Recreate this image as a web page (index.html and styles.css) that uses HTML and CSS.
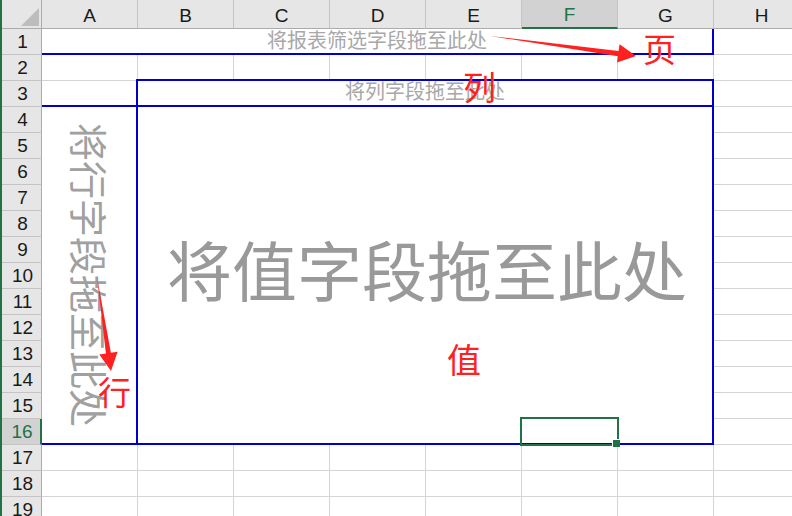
FILE: index.html
```html
<!DOCTYPE html>
<html lang="zh-CN">

<head>
    <meta charset="UTF-8">
    <title>数据透视表</title>
    <link rel="stylesheet" href="styles.css">
</head>

<body>
    <div class="sheet">
        <!-- Headers -->
        <div class="corner"></div>
        <div class="col-head">A</div>
        <div class="col-head">B</div>
        <div class="col-head">C</div>
        <div class="col-head">D</div>
        <div class="col-head">E</div>
        <div class="col-head active">F</div>
        <div class="col-head">G</div>
        <div class="col-head">H</div>

        <div class="row-head">1</div>
        <div class="row-head">2</div>
        <div class="row-head">3</div>
        <div class="row-head">4</div>
        <div class="row-head">5</div>
        <div class="row-head">6</div>
        <div class="row-head">7</div>
        <div class="row-head">8</div>
        <div class="row-head">9</div>
        <div class="row-head">10</div>
        <div class="row-head">11</div>
        <div class="row-head">12</div>
        <div class="row-head">13</div>
        <div class="row-head">14</div>
        <div class="row-head">15</div>
        <div class="row-head active">16</div>
        <div class="row-head">17</div>
        <div class="row-head">18</div>
        <div class="row-head">19</div>

        <!-- Cell grid -->
        <div class="cells"></div>

        <!-- Pivot drop zones -->
        <div class="drop page-drop">将报表筛选字段拖至此处</div>
        <div class="drop col-drop">将列字段拖至此处</div>
        <div class="drop row-drop"><span>将行字段拖至此处</span></div>
        <div class="drop data-drop">将值字段拖至此处</div>

        <!-- Active cell -->
        <div class="selection"><span class="handle"></span></div>

        <!-- Annotations -->
        <svg class="arrows" width="792" height="516" viewBox="0 0 792 516">
            <polygon points="490,36 618.5,51.1 619.6,44.2 636,56 617,62.6 617.9,56.2" />
            <polygon points="97,277 110.9,352.8 117.6,351.8 111,371 99.3,354.6 105.9,353.6" />
        </svg>
        <span class="note note-page">页</span>
        <span class="note note-col">列</span>
        <span class="note note-row">行</span>
        <span class="note note-value">值</span>
    </div>
</body>

</html>
```

FILE: styles.css
```css
body {
    margin: 0;
    background: #fff;
    overflow: hidden;
}

.sheet {
    position: relative;
    display: grid;
    grid-template-columns: 40px repeat(8, 96px);
    grid-template-rows: 29px repeat(19, 26px);
    border-left: 2px solid #217346;
    width: 790px;
    height: 516px;
    overflow: hidden;
    font-family: "Liberation Sans", Arial, sans-serif;
}

/* Headers */
.corner,
.col-head,
.row-head {
    box-sizing: border-box;
    display: flex;
    align-items: center;
    justify-content: center;
    background: #e6e6e6;
    color: #1a1a1a;
    font-size: 19px;
    line-height: 1;
}

.corner {
    align-items: flex-end;
    justify-content: flex-end;
    padding: 0 2px 2px 0;
    border-right: 1px solid #ababab;
    border-bottom: 1px solid #ababab;
}

.corner::after {
    content: "";
    width: 18px;
    height: 18px;
    background: #bdbdbd;
    clip-path: polygon(100% 0, 100% 100%, 0 100%);
}

.col-head {
    padding-top: 2px;
    border-right: 1px solid #c4c4c4;
    border-bottom: 1px solid #ababab;
}

.row-head {
    grid-column: 1;
    padding-left: 2px;
    border-right: 1px solid #ababab;
    border-bottom: 1px solid #c4c4c4;
}

.col-head.active {
    background: #d2d2d2;
    color: #217346;
    border-bottom: 2px solid #217346;
}

.row-head.active {
    background: #d2d2d2;
    color: #217346;
    border-right: 2px solid #217346;
}

/* Cells */
.cells {
    grid-column: 2 / -1;
    grid-row: 2 / -1;
    background:
        repeating-linear-gradient(to right, transparent 0 95px, #d4d4d4 95px 96px),
        repeating-linear-gradient(to bottom, transparent 0 25px, #d4d4d4 25px 26px),
        #fff;
}

/* Pivot drop zones */
.drop {
    box-sizing: border-box;
    display: flex;
    align-items: center;
    justify-content: center;
    background: #fff;
    border: 0 solid #0000cc;
    font-family: "Noto Sans CJK SC", sans-serif;
    line-height: 1;
    white-space: nowrap;
}

.page-drop {
    grid-column: 2 / 9;
    grid-row: 2;
    border-right-width: 2px;
    border-bottom-width: 2px;
    padding-bottom: 2px;
    font-size: 20px;
    color: #a8a8a8;
}

.col-drop {
    grid-column: 3 / 9;
    grid-row: 4;
    margin: -2px 0 0 -2px;
    border-width: 2px;
    padding-bottom: 4px;
    font-size: 20px;
    color: #a8a8a8;
}

.row-drop {
    grid-column: 2;
    grid-row: 5 / 18;
    margin-top: -2px;
    border-top-width: 2px;
    border-bottom-width: 2px;
    font-size: 38px;
    color: #a0a0a0;
}

.row-drop span {
    writing-mode: vertical-rl;
    text-orientation: sideways;
}

.data-drop {
    grid-column: 3 / 9;
    grid-row: 5 / 18;
    margin: -2px 0 0 -2px;
    border-width: 2px;
    padding: 0 0 14px 4px;
    font-size: 65px;
    color: #999;
}

/* Active cell */
.selection {
    position: relative;
    grid-column: 7;
    grid-row: 17;
    margin: -2px -1px -1px -2px;
    border: 2px solid #217346;
}

.handle {
    position: absolute;
    right: -3px;
    bottom: -3px;
    width: 7px;
    height: 7px;
    background: #217346;
    box-shadow: -1px -1px 0 #fff;
}

/* Annotations */
.arrows {
    position: absolute;
    left: -2px;
    top: 0;
    fill: #ff2020;
    pointer-events: none;
}

.note {
    position: absolute;
    font-family: "Noto Sans CJK SC", sans-serif;
    font-size: 33px;
    line-height: 1;
    color: #ff2020;
}

.note-page {
    left: 641px;
    top: 32px;
}

.note-col {
    left: 461px;
    top: 70px;
}

.note-row {
    left: 96px;
    top: 375px;
}

.note-value {
    left: 445px;
    top: 342px;
    font-size: 34px;
}
```
